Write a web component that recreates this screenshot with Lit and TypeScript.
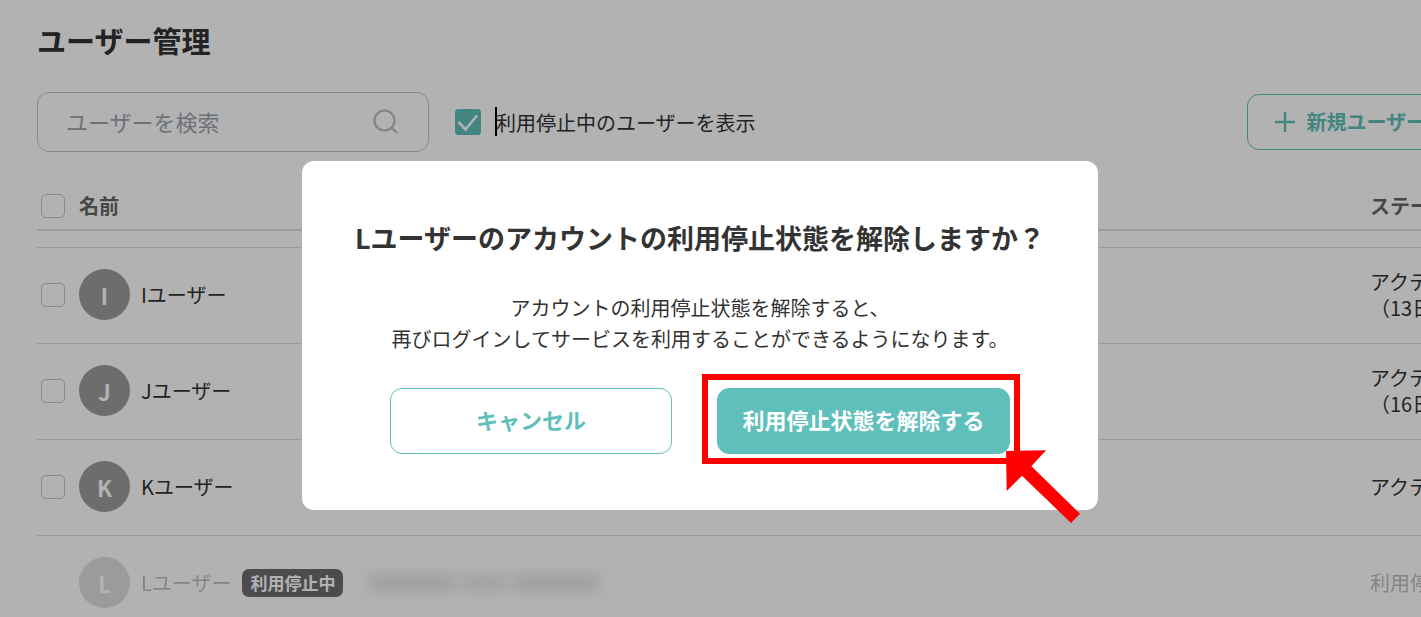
import { LitElement, html, css, nothing } from "lit";
import { customElement, property } from "lit/decorators.js";

interface User {
  id: string;
  initial: string;
  name: string;
  status: string[];
  suspended?: boolean;
}

const USERS: User[] = [
  { id: "i", initial: "I", name: "Iユーザー", status: ["アクティブ", "（13日前）"] },
  { id: "j", initial: "J", name: "Jユーザー", status: ["アクティブ", "（16日前）"] },
  { id: "k", initial: "K", name: "Kユーザー", status: ["アクティブ"] },
  { id: "l", initial: "L", name: "Lユーザー", status: ["利用停止中"], suspended: true },
];

@customElement("user-toolbar")
class UserToolbar extends LitElement {
  static styles = css`
    :host {
      display: flex;
      align-items: center;
      height: 60px;
    }
    .search {
      box-sizing: border-box;
      display: flex;
      align-items: center;
      width: 392px;
      height: 60px;
      padding: 0 28px;
      border: 1px solid #c4c4c4;
      border-radius: 12px;
    }
    .search input {
      flex: 1;
      min-width: 0;
      padding: 0 0 2px;
      border: 0;
      outline: 0;
      background: none;
      font: inherit;
      font-size: 22px;
      color: #333;
    }
    .search input::placeholder {
      color: #9ca3af;
      opacity: 1;
    }
    .search svg {
      display: block;
      width: 28px;
      height: 28px;
      color: #bdbdbd;
    }
    .toggle {
      display: flex;
      align-items: center;
      margin-left: 26px;
    }
    .box {
      display: grid;
      margin-right: 15px;
    }
    .box > * {
      grid-area: 1 / 1;
    }
    .box input {
      appearance: none;
      box-sizing: border-box;
      width: 26px;
      height: 26px;
      margin: 0;
      border: 1px solid #c4c4c4;
      border-radius: 3px;
    }
    .box input:checked {
      border-color: #5fc0bb;
      background: #5fc0bb;
    }
    .box svg {
      width: 26px;
      height: 26px;
      pointer-events: none;
    }
    .label {
      position: relative;
      padding-top: 2px;
    }
    .caret {
      position: absolute;
      top: 1px;
      left: -1px;
      width: 2px;
      height: 29px;
      background: #000;
    }
    .create {
      display: flex;
      align-items: center;
      gap: 10px;
      height: 56px;
      margin-left: auto;
      padding: 0 26px;
      border: 1px solid #5fc0bb;
      border-radius: 12px;
      background: #fff;
      color: #5fc0bb;
      font: inherit;
      font-weight: 700;
      white-space: nowrap;
    }
    .create svg {
      width: 22px;
      height: 22px;
    }
  `;

  render() {
    return html`
      <div class="search">
        <input type="search" aria-label="ユーザーを検索" placeholder="ユーザーを検索" />
        <svg viewBox="0 0 28 28" fill="none" stroke="currentColor" stroke-width="2.2" aria-hidden="true">
          <circle cx="12.5" cy="12.5" r="10" />
          <path d="M19.1 19.1 25.2 25" />
        </svg>
      </div>
      <div class="toggle">
        <span class="box">
          <input id="show-suspended" type="checkbox" checked />
          <svg viewBox="0 0 26 26" fill="none" stroke="#fff" stroke-width="2.6" aria-hidden="true">
            <path d="M3.5 13 10.5 20.5 22 6.5" />
          </svg>
        </span>
        <label class="label" for="show-suspended"><span class="caret"></span>利用停止中のユーザーを表示</label>
      </div>
      <button class="create" type="button">
        <svg viewBox="0 0 22 22" fill="none" stroke="currentColor" stroke-width="2.4" aria-hidden="true">
          <path d="M11 1v20M1 11h20" />
        </svg>
        新規ユーザー登録
      </button>
    `;
  }
}

@customElement("user-table")
class UserTable extends LitElement {
  @property({ attribute: false }) users: User[] = [];

  static styles = css`
    :host {
      display: block;
    }
    table {
      width: 100%;
      border-spacing: 0;
      table-layout: fixed;
    }
    th,
    td {
      padding: 0;
      text-align: left;
    }
    th {
      box-sizing: border-box;
      height: 50px;
      padding-top: 2px;
      border-bottom: 2px solid #e0e0e0;
      color: #666;
      font-weight: 700;
    }
    .check {
      width: 42px;
    }
    .status {
      width: 123px;
      white-space: nowrap;
    }
    .spacer td {
      height: 16px;
    }
    .row td {
      box-sizing: border-box;
      height: 96px;
      padding-bottom: 2px;
      border-top: 1px solid #dcdcdc;
      line-height: 26px;
    }
    input {
      appearance: none;
      display: block;
      box-sizing: border-box;
      width: 24px;
      height: 24px;
      margin: 0 0 0 4px;
      border: 1px solid #c4c4c4;
      border-radius: 5px;
    }
    .person {
      display: flex;
      align-items: center;
      gap: 11px;
    }
    .avatar {
      display: grid;
      place-items: center;
      width: 51px;
      height: 51px;
      border-radius: 50%;
      background: #9c9c9c;
      color: #fff;
      font-size: 22px;
      font-weight: 700;
    }
    .faded {
      opacity: 0.32;
    }
    .badge {
      height: 28px;
      padding: 0 8px;
      border-radius: 7px;
      background: #6e6e6e;
      color: #fff;
      font-size: 17px;
      font-weight: 700;
      line-height: 28px;
    }
    .masked {
      display: flex;
      gap: 6px;
      margin-left: 15px;
      filter: blur(7px);
    }
    .masked span {
      width: 86px;
      height: 16px;
      background: #e3e3e3;
    }
    .masked span:nth-child(2) {
      width: 46px;
      background: #e8e8e8;
    }
    .masked span:nth-child(3) {
      width: 86px;
    }
  `;

  private renderRow(u: User) {
    const tone = u.suspended ? "faded" : "";
    return html`
      <tr class="row">
        <td>${u.suspended ? nothing : html`<input type="checkbox" aria-label=${u.name} />`}</td>
        <td>
          <div class="person">
            <span class="avatar ${tone}">${u.initial}</span>
            <span class=${tone}>${u.name}</span>
            ${u.suspended
              ? html`<span class="badge">利用停止中</span>
                  <span class="masked"><span></span><span></span><span></span></span>`
              : nothing}
          </div>
        </td>
        <td class="status">${u.status.map((s) => html`<div class=${tone}>${s}</div>`)}</td>
      </tr>
    `;
  }

  render() {
    return html`
      <table>
        <thead>
          <tr>
            <th class="check"><input type="checkbox" aria-label="すべて選択" /></th>
            <th>名前</th>
            <th class="status">ステータス</th>
          </tr>
        </thead>
        <tbody>
          <tr class="spacer"><td colspan="3"></td></tr>
          ${this.users.map((u) => this.renderRow(u))}
        </tbody>
      </table>
    `;
  }
}

@customElement("confirm-dialog")
class ConfirmDialog extends LitElement {
  static styles = css`
    :host {
      position: fixed;
      inset: 0;
      display: flex;
      align-items: flex-start;
      justify-content: center;
      padding: 161px 21px 0 0;
      background: rgba(0, 0, 0, 0.3);
    }
    .dialog {
      box-sizing: border-box;
      width: 796px;
      padding: 57px 40px 56px;
      border-radius: 12px;
      background: #fff;
      text-align: center;
    }
    h2 {
      margin: 0 0 34px;
      font-size: 27px;
      line-height: 40px;
      font-weight: 700;
      white-space: nowrap;
    }
    p {
      margin: 0 0 34px;
      line-height: 31px;
      white-space: nowrap;
    }
    .actions {
      display: flex;
      justify-content: center;
      gap: 45px;
    }
    button {
      box-sizing: border-box;
      height: 66px;
      padding: 0 22px 4px;
      border: 1px solid #5fc0bb;
      border-radius: 12px;
      font: inherit;
      font-size: 22px;
      font-weight: 700;
    }
    .cancel {
      width: 282px;
      background: #fff;
      color: #5fc0bb;
    }
    .primary {
      width: 293px;
      background: #5fc0bb;
      color: #fff;
    }
    .target {
      position: relative;
    }
    .frame {
      position: absolute;
      inset: -14px -10px -10px -15px;
      border: 6px solid #f00;
      pointer-events: none;
    }
    .arrow {
      position: absolute;
      top: 62px;
      left: 289px;
      width: 76px;
      height: 74px;
      pointer-events: none;
    }
  `;

  render() {
    return html`
      <div class="dialog" role="dialog" aria-modal="true" aria-labelledby="heading">
        <h2 id="heading">Lユーザーのアカウントの利用停止状態を解除しますか？</h2>
        <p>
          アカウントの利用停止状態を解除すると、<br />再びログインしてサービスを利用することができるようになります。
        </p>
        <div class="actions">
          <button class="cancel" type="button">キャンセル</button>
          <div class="target">
            <button class="primary" type="button">利用停止状態を解除する</button>
            <div class="frame"></div>
            <svg class="arrow" viewBox="0 0 76 74" aria-hidden="true">
              <path fill="#f00" d="M0 1 40 0.3 25.4 16.3 74 63.7 65 73 16 25.7 0.7 41z" />
            </svg>
          </div>
        </div>
      </div>
    `;
  }
}

@customElement("app-root")
class AppRoot extends LitElement {
  static styles = css`
    :host {
      display: block;
      box-sizing: border-box;
      height: 100vh;
      overflow: hidden;
      padding: 18px 0 0 37px;
      background: #fff;
      color: #333;
      font-family: "Noto Sans CJK JP", "Noto Sans", sans-serif;
      font-size: 20px;
      line-height: 30px;
    }
    .page {
      min-width: 1456px;
    }
    h1 {
      margin: 0 0 30px;
      font-size: 29px;
      line-height: 44px;
      font-weight: 700;
    }
    user-table {
      margin-top: 29px;
    }
  `;

  render() {
    return html`
      <main class="page">
        <h1>ユーザー管理</h1>
        <user-toolbar></user-toolbar>
        <user-table .users=${USERS}></user-table>
      </main>
      <confirm-dialog></confirm-dialog>
    `;
  }
}
